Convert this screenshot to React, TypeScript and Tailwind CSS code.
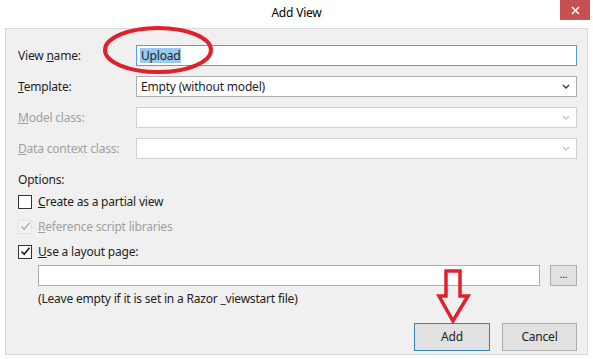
import React from 'react';

function Chevron({ disabled }: { disabled?: boolean }) {
  return (
    <svg width="8" height="5" viewBox="0 0 8 5" className="mr-[6px]">
      <path d="M1 1 L4 4 L7 1" fill="none" stroke={disabled ? '#c4c4c4' : '#333'} strokeWidth="1.3" />
    </svg>
  );
}

function Check({ color }: { color: string }) {
  return (
    <svg width="11" height="11" viewBox="0 0 11 11">
      <path d="M1.5 5.5 L4.2 8.3 L9.5 1.8" fill="none" stroke={color} strokeWidth="1.6" />
    </svg>
  );
}

export default function App() {
  return (
    <div
      className="relative w-[593px] h-[359px] bg-white flex flex-col overflow-hidden text-[12px] tracking-[-0.2px] text-[#1e1e1e]"
      style={{ fontFamily: '"Noto Sans", "Segoe UI", sans-serif' }}
    >
      {/* title bar */}
      <div className="relative h-[28px] flex items-center justify-center">
        <span className="text-[12px] text-black -mt-[2px]">Add View</span>
        <div className="absolute right-[3px] top-0 w-[30px] h-[20px] bg-[#c75050] flex items-center justify-center">
          <svg width="9" height="9" viewBox="0 0 9 9">
            <path d="M1 1 L8 8 M8 1 L1 8" stroke="white" strokeWidth="1.6" />
          </svg>
        </div>
      </div>

      {/* dialog body */}
      <div className="mx-[5px] h-[327px] border border-[#d9d9d9] bg-[#f0f0f0] flex flex-col pl-[12px] pr-[10px] pt-[16px]">
        <div className="flex flex-col gap-[10px]">
          <div className="flex items-center h-[21px]">
            <span className="w-[118px]">View <u>n</u>ame:</span>
            <div className="flex-1 h-[21px] border border-[#569de5] bg-white flex items-center pl-[3px]">
              <span className="bg-[#99c9ef] px-[1px] leading-[15px]">Upload</span>
            </div>
          </div>
          <div className="flex items-center h-[21px]">
            <span className="w-[118px]"><u>T</u>emplate:</span>
            <div className="flex-1 h-[21px] border border-[#acacac] bg-white flex items-center justify-between pl-[4px]">
              <span>Empty (without model)</span>
              <Chevron />
            </div>
          </div>
          <div className="flex items-center h-[21px]">
            <span className="w-[118px] text-[#a0a0a0]"><u>M</u>odel class:</span>
            <div className="flex-1 h-[21px] border border-[#d0d0d0] bg-white flex items-center justify-end">
              <Chevron disabled />
            </div>
          </div>
          <div className="flex items-center h-[21px]">
            <span className="w-[118px] text-[#a0a0a0]"><u>D</u>ata context class:</span>
            <div className="flex-1 h-[21px] border border-[#d0d0d0] bg-white flex items-center justify-end">
              <Chevron disabled />
            </div>
          </div>
        </div>

        <div className="mt-[13px] h-[16px] flex items-center">Options:</div>

        <div className="mt-[1px] flex flex-col">
          <div className="h-[25px] flex items-center gap-[6px]">
            <div className="w-[14px] h-[14px] border border-[#333] bg-white" />
            <span><u>C</u>reate as a partial view</span>
          </div>
          <div className="h-[25px] flex items-center gap-[6px] text-[#a0a0a0]">
            <div className="w-[14px] h-[14px] border border-[#e3e3e3] bg-[#f4f4f4] flex items-center justify-center">
              <Check color="#b5b5b5" />
            </div>
            <span><u>R</u>eference script libraries</span>
          </div>
          <div className="h-[25px] flex items-center gap-[6px]">
            <div className="w-[14px] h-[14px] border border-[#333] bg-white flex items-center justify-center">
              <Check color="#222" />
            </div>
            <span><u>U</u>se a layout page:</span>
          </div>
        </div>

        <div className="mt-[1px] ml-[20px] flex flex-col">
          <div className="flex items-center gap-[10px] h-[21px]">
            <div className="flex-1 h-[21px] border border-[#acacac] bg-white" />
            <div className="w-[27px] h-[21px] border border-[#adadad] bg-[#e1e1e1] flex items-center justify-center text-[10px] leading-none pb-[3px]">
              ...
            </div>
          </div>
          <div className="mt-[5px] h-[16px] flex items-center">
            (Leave empty if it is set in a Razor _viewstart file)
          </div>
        </div>

        <div className="mt-[16px] flex justify-end gap-[12px]">
          <div className="w-[76px] h-[28px] border border-[#3c7fb1] bg-[#e1e1e1] flex items-center justify-center">
            Add
          </div>
          <div className="w-[75px] h-[28px] border border-[#adadad] bg-[#e1e1e1] flex items-center justify-center">
            Cancel
          </div>
        </div>
      </div>

      {/* red annotations drawn over the dialog */}
      <svg className="absolute left-0 top-0 pointer-events-none" width="593" height="359" viewBox="0 0 593 359">
        <ellipse cx="158" cy="50" rx="53" ry="22" fill="none" stroke="#e0202a" strokeWidth="4" />
        <path
          d="M446 271 L460 271 L460 296 L468 296 L453 321 L439 296 L446 296 Z"
          fill="none"
          stroke="#e0202a"
          strokeWidth="3.5"
          strokeLinejoin="miter"
        />
      </svg>
    </div>
  );
}
